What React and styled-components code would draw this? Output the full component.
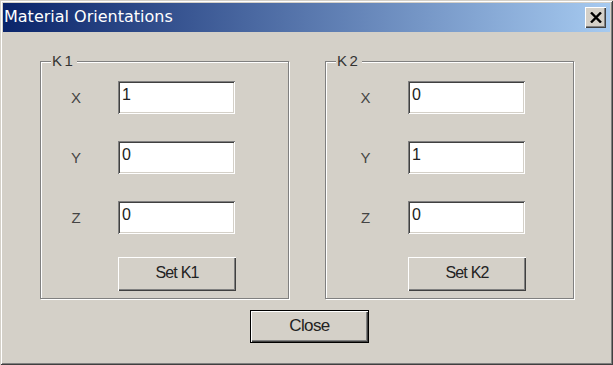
import React from "react";
import styled, { createGlobalStyle } from "styled-components";

const Global = createGlobalStyle`
  html, body { margin: 0; padding: 0; background: #d4d0c8; }
  body { font-family: "Liberation Sans", Arial, sans-serif; }
  * { box-sizing: border-box; }
`;

const Window = styled.div`
  width: 613px;
  height: 365px;
  padding: 3px;
  background: #d4d0c8;
  display: flex;
  flex-direction: column;
  box-shadow:
    inset 1px 1px 0 #d4d0c8,
    inset -1px -1px 0 #404040,
    inset 2px 2px 0 #ffffff,
    inset -2px -2px 0 #808080;
`;

const TitleBar = styled.div`
  height: 29px;
  flex: none;
  display: flex;
  align-items: center;
  justify-content: space-between;
  padding: 0 4px 0 1px;
  background: linear-gradient(to right, #0a246a, #a6caf0);
`;

const TitleText = styled.span`
  color: #ffffff;
  font-family: "DejaVu Sans", Verdana, sans-serif;
  font-size: 16px;
  line-height: 1;
  padding-bottom: 1px;
`;

const TitleClose = styled.button`
  width: 21px;
  height: 21px;
  padding: 0;
  border: none;
  background: #d4d0c8;
  display: flex;
  align-items: center;
  justify-content: center;
  box-shadow:
    inset 1px 1px 0 #ffffff,
    inset -1px -1px 0 #404040,
    inset -2px -2px 0 #808080;
`;

const Body = styled.div`
  flex: 1;
  display: flex;
  flex-direction: column;
  padding: 29px 35px 0 37px;
`;

const GroupRow = styled.div`
  display: flex;
  gap: 36px;
`;

const Group = styled.div`
  position: relative;
  width: 249px;
  height: 238px;
  border: 1px solid #808080;
  box-shadow: 1px 1px 0 #ffffff, inset 1px 1px 0 #ffffff;
  padding-top: 19px;
  display: grid;
  grid-template-columns: ${(p) => p.$labelCol}px 117px;
  grid-auto-rows: 33px;
  row-gap: 27px;
  align-content: start;
  align-items: center;
`;

const Legend = styled.span`
  position: absolute;
  left: 10px;
  top: -9px;
  padding: 0 2px 0 1px;
  background: #d4d0c8;
  color: #333333;
  font-size: 15px;
  letter-spacing: 2.5px;
  line-height: 16px;
`;

const AxisLabel = styled.span`
  color: #444444;
  font-size: 15px;
  text-align: center;
  padding-right: ${(p) => p.$pad}px;
`;

const Field = styled.input`
  width: 117px;
  height: 33px;
  border: none;
  outline: none;
  background: #ffffff;
  padding: 0 2px 6px 4px;
  font-family: "Liberation Sans", Arial, sans-serif;
  font-size: 16px;
  color: #222222;
  box-shadow:
    inset 1px 1px 0 #808080,
    inset -1px -1px 0 #ffffff,
    inset 2px 2px 0 #404040,
    inset -2px -2px 0 #d4d0c8;
`;

const PushButton = styled.button`
  grid-column: 2;
  width: 118px;
  height: 34px;
  margin-top: -8px;
  border: none;
  background: #d4d0c8;
  font-family: "Liberation Sans", Arial, sans-serif;
  font-size: 16px;
  letter-spacing: -0.8px;
  color: #222222;
  padding: 0 0 2px;
  box-shadow:
    inset 1px 1px 0 #ffffff,
    inset -1px -1px 0 #404040,
    inset -2px -2px 0 #808080;
`;

const Footer = styled.div`
  display: flex;
  justify-content: center;
  padding-left: 4px;
  margin-top: 11px;
`;

const CloseButton = styled.button`
  width: 119px;
  height: 33px;
  border: 1px solid #000000;
  background: #d4d0c8;
  font-family: "Liberation Sans", Arial, sans-serif;
  font-size: 17px;
  letter-spacing: -0.6px;
  color: #222222;
  padding: 0 0 2px;
  box-shadow:
    inset 1px 1px 0 #ffffff,
    inset -1px -1px 0 #404040,
    inset -2px -2px 0 #808080;
`;

const CrossIcon = () => (
  <svg width="12" height="11" viewBox="0 0 12 11">
    <path d="M1 0.5 L11 10.5 M11 0.5 L1 10.5" stroke="#000" strokeWidth="2.4" fill="none" />
  </svg>
);

const groups = [
  { name: "K1", values: ["1", "0", "0"], labelCol: 77, pad: 7 },
  { name: "K2", values: ["0", "1", "0"], labelCol: 82, pad: 3 },
];

export default function App() {
  return (
    <>
      <Global />
      <Window>
        <TitleBar>
          <TitleText>Material Orientations</TitleText>
          <TitleClose aria-label="Close">
            <CrossIcon />
          </TitleClose>
        </TitleBar>
        <Body>
          <GroupRow>
            {groups.map((g) => (
              <Group key={g.name} $labelCol={g.labelCol}>
                <Legend>{g.name}</Legend>
                {["X", "Y", "Z"].map((axis, i) => (
                  <React.Fragment key={axis}>
                    <AxisLabel $pad={g.pad}>{axis}</AxisLabel>
                    <Field defaultValue={g.values[i]} />
                  </React.Fragment>
                ))}
                <PushButton>Set {g.name}</PushButton>
              </Group>
            ))}
          </GroupRow>
          <Footer>
            <CloseButton>Close</CloseButton>
          </Footer>
        </Body>
      </Window>
    </>
  );
}
